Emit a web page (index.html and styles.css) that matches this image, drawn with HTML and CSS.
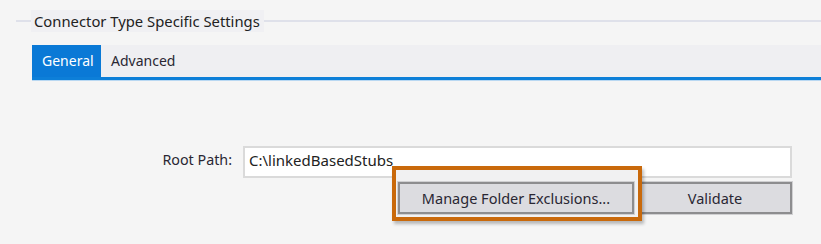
FILE: index.html
```html
<!DOCTYPE html>
<html lang="en">
<head>
  <meta charset="UTF-8">
  <meta name="viewport" content="width=device-width, initial-scale=1.0">
  <title>Connector Type Specific Settings</title>
  <link rel="stylesheet" href="styles.css">
</head>
<body>
  <div class="group-header">
    <span class="rule-short"></span>
    <span class="legend">Connector Type Specific Settings</span>
    <span class="rule-long"></span>
  </div>

  <div class="tabs">
    <div class="tab active">General</div>
    <div class="tab">Advanced</div>
  </div>

  <div class="form">
    <label class="label" for="rootPath">Root Path:</label>
    <input type="text" id="rootPath" class="field" value="C:\linkedBasedStubs">

    <div class="actions">
      <div class="callout">
        <span class="callout-frame"></span>
        <button class="btn manage">Manage Folder Exclusions...</button>
      </div>
      <button class="btn validate">Validate</button>
    </div>
  </div>
</body>
</html>
```

FILE: styles.css
```css
html {
  height: 100%;
}
body {
  margin: 0;
  min-height: 244px;
  padding-bottom: 30px;
  box-sizing: border-box;
  background: #f5f5f5;
  font-family: "Noto Sans", "Open Sans", sans-serif;
  font-size: 14px;
  color: #2a2733;
}
.group-header {
  display: flex;
  align-items: center;
  height: 22px;
  padding-top: 10px;
}
.rule-short {
  width: 15px;
  margin-left: 16px;
  border-top: 2px solid #dfe1ea;
}
.rule-long {
  flex: 1;
  border-top: 2px solid #dfe1ea;
}
.legend {
  background: #f0f0f3;
  padding: 0 4px 0 3px;
  line-height: 22px;
  font-size: 14.8px;
  color: #222;
}
.tabs {
  display: flex;
  margin: 13px 0 0 32px;
  height: 32px;
  background: #efeff2;
  border-bottom: 3px solid #0d7fd8;
  box-shadow: 0 1px 0 #b9d8f2;
}
.tab {
  padding: 0 9px 0 10px;
  line-height: 32px;
  color: #2a2733;
}
.tab.active {
  background: #0a79d6;
  color: #fff;
  width: 50px;
}
.form {
  display: grid;
  grid-template-columns: 232px 549px;
  column-gap: 11px;
  row-gap: 4px;
  margin-top: 66px;
}
.label {
  text-align: right;
  padding-top: 4px;
  line-height: 20px;
  font-size: 14.3px;
}
.field {
  box-sizing: border-box;
  height: 32px;
  margin: 0;
  padding: 0 4px 4px;
  border: 2px solid #dadada;
  background: #fff;
  font: inherit;
  font-size: 15px;
  color: #222;
}
.actions {
  grid-column: 2;
  display: flex;
  justify-content: flex-end;
  gap: 4px;
}
.btn {
  display: block;
  box-sizing: border-box;
  height: 32px;
  margin: 0;
  border: 2px solid #8d8d8f;
  box-shadow: 0 0 0 1px #d0d0d2;
  background: #dcdce0;
  font: inherit;
  font-size: 14.5px;
  color: #2a2733;
  padding: 0;
}
.manage {
  width: 236px;
}
.validate {
  width: 154px;
}
/* orange highlight drawn over the input, behind the button */
.callout {
  position: relative;
  z-index: 1;
}
.callout-frame {
  position: absolute;
  top: -16px;
  left: -6px;
  right: -8px;
  bottom: -7px;
  z-index: -1;
  border: 4px solid #c9690b;
  background: #f1f1f2;
  box-shadow: 2px 3px 3px rgba(0, 0, 0, 0.25);
}
```
